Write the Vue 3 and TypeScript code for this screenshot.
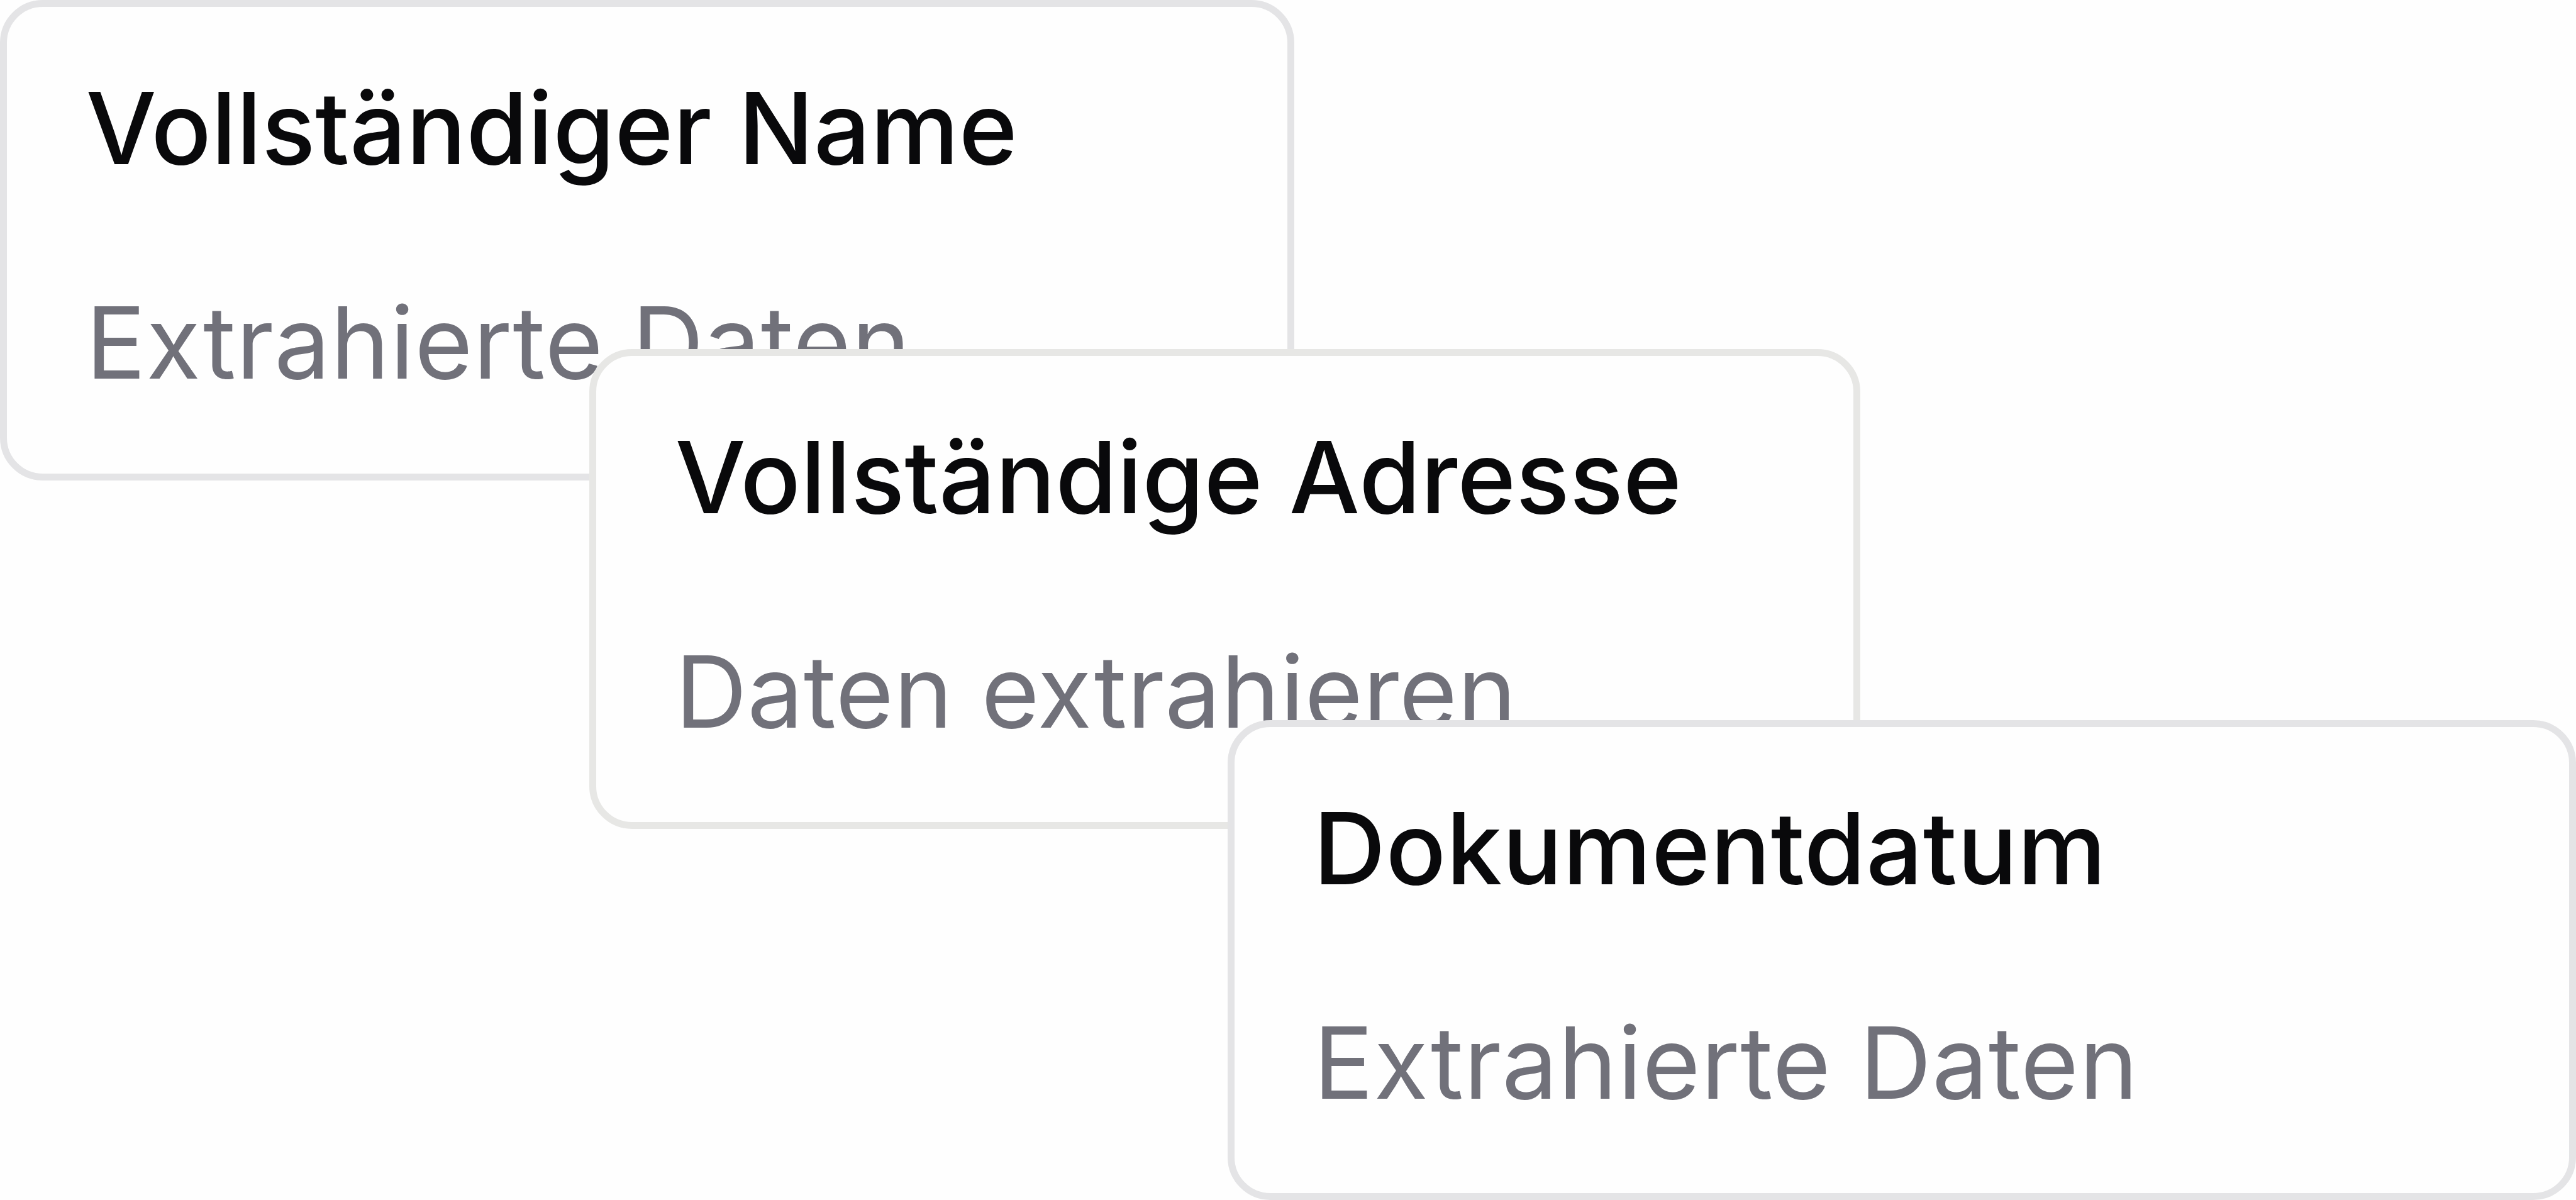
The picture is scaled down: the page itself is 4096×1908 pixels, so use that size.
<script setup lang="ts">
interface Field {
  id: string
  title: string
  value: string
}

const fields: Field[] = [
  { id: 'name', title: 'Vollständiger Name', value: 'Extrahierte Daten' },
  { id: 'address', title: 'Vollständige Adresse', value: 'Daten extrahieren' },
  { id: 'date', title: 'Dokumentdatum', value: 'Extrahierte Daten' },
]
</script>

<template>
  <main class="stack">
    <section v-for="field in fields" :key="field.id" class="card" :class="field.id">
      <h2 class="title">{{ field.title }}</h2>
      <p class="value">{{ field.value }}</p>
    </section>
  </main>
</template>

<style>
body {
  margin: 0;
  background: #fefefe;
}
</style>

<style scoped>
.stack {
  display: flex;
  flex-direction: column;
  align-items: flex-start;
  width: 4096px;
  height: 1908px;
  overflow: hidden;
  font-family: Inter, "Liberation Sans", sans-serif;
}

.card {
  box-sizing: border-box;
  flex: none;
  display: flex;
  flex-direction: column;
  gap: 148.6px;
  height: 763px;
  padding: 96.4px 0 0 125.5px;
  border: 11px solid #e4e4e6;
  border-radius: 68px;
  background: #fefefe;
}

.title,
.value {
  margin: 0;
  font-size: 158.5px;
  line-height: 192px;
  white-space: nowrap;
}

.title {
  font-weight: 500;
  color: #09090b;
}

.value {
  font-weight: 400;
  letter-spacing: 0.75px;
  color: #71717a;
}

/* Each card overlaps the lower right corner of the one before it. */
.name {
  width: 2058px;
  height: 764px;
}

.address {
  width: 2021px;
  margin: -209px 0 0 937px;
  border-color: #e7e7e5;
}

.address .value {
  letter-spacing: 0.42px;
}

.date {
  width: 2144px;
  margin: -173px 0 0 1952px;
}

.date .title {
  letter-spacing: 0.55px;
}
</style>
